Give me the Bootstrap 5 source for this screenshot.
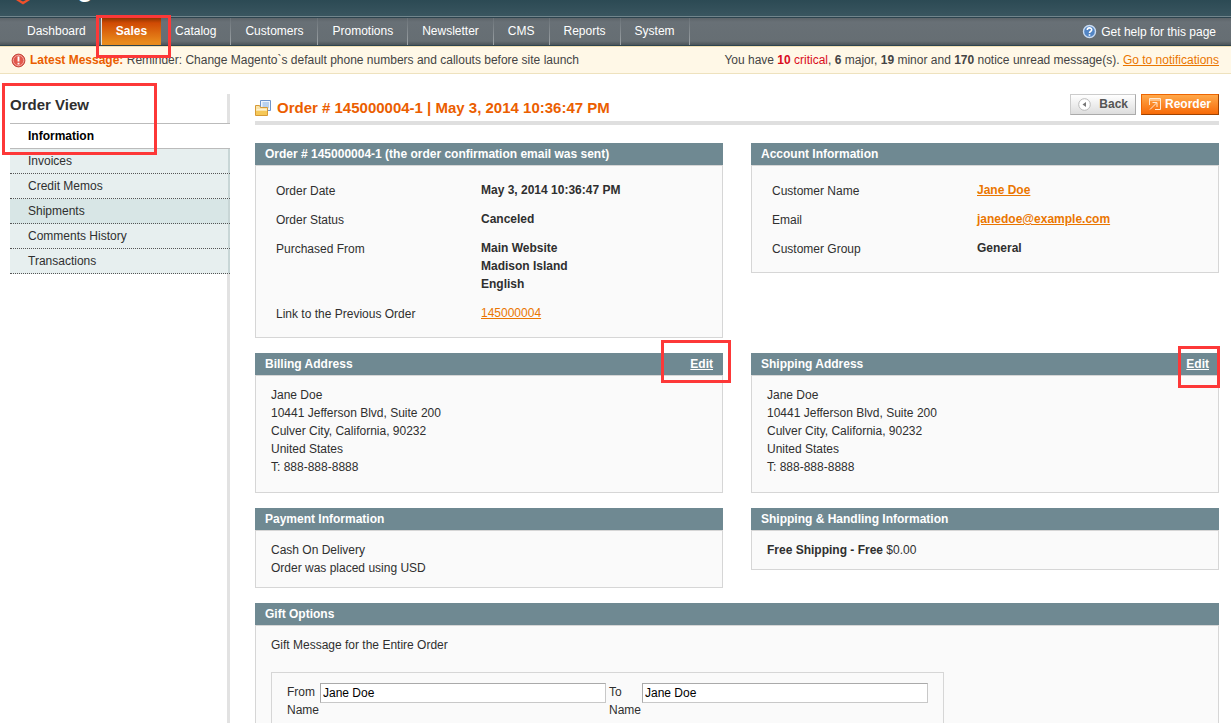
<!DOCTYPE html>
<html lang="en">
<head>
<meta charset="utf-8">
<meta name="viewport" content="width=device-width, initial-scale=1">
<title>Order # 145000004-1 / Orders / Sales</title>
<link href="https://cdn.jsdelivr.net/npm/bootstrap@5.3.0/dist/css/bootstrap.min.css" rel="stylesheet">
<script src="https://cdn.jsdelivr.net/npm/bootstrap@5.3.0/dist/js/bootstrap.bundle.min.js" defer></script>
<style>
body{font:12px/18px "Liberation Sans",Arial,sans-serif;color:#2f2f2f;background:#fff}
a{color:#ea7601}
a:hover{color:#c25f00}
.brand-bar{height:18px;background:linear-gradient(#2c4a54,#3a5660);border-bottom:1px solid #2d444f;box-shadow:inset 0 -1px #71858c;padding-left:16px}
.brand-name{font-size:30px;line-height:30px;margin:-29px 0 0 5px;color:#fff}
.main-nav{height:28px;background:linear-gradient(#5d6469,#687076 4px,#666e73 23px,#4d555a);border-bottom:1px solid #2d444f;padding:0 15px 0 13px}
.main-nav .nav-link{color:#fff;padding:4px 14px 5px;border-right:1px solid;border-image:linear-gradient(#687076,#a0a6a9) 1}
.main-nav .nav-link.dash{padding-right:15px;border-image:none;border-right-color:#e0e0e0}
.main-nav .nav-link.active{font-weight:700;border-right:0;background:linear-gradient(#8d3500,#d04a04 5px,#e98a1c 90%)}
.help-link{color:#fff}
.notice-bar{background:#fff8e7;border-bottom:1px solid #eee2be;border-top:1px solid #f1dfb4;color:#444;padding:4px 12px 4px 11px}
.notice-bar strong.latest{color:#ea5e00}
.critical{color:#d90c1c}
.side{width:230px;padding:20px 0 0 10px;background:linear-gradient(#e2e2e2,#e2e2e2) right 20px/3px no-repeat}
.side h3{font-size:15px;line-height:22px;padding-bottom:7px;border-bottom:1px solid #bbb}
.tabs a{color:#2f2f2f;padding:3px 18px;border-bottom:1px dotted #555;background:linear-gradient(#c8d6d6,#c8d6d6) right/2px no-repeat #e7efef}
.tabs a.active{color:#000;font-weight:700;background:#fff;border-bottom:1px solid #bbb}
.tabs a.changed{background-color:#d8e6e6}
.work{padding:20px 12px 0 25px}
.page-head{border-bottom:4px solid #dfdfdf;padding-bottom:3px;margin-bottom:18px}
.page-head h1{font-size:15px;line-height:21px;color:#eb5e00;padding-top:3px}
.acts{gap:5px}
.act{font:bold 12px/16px "Liberation Sans",Arial,sans-serif;border:1px solid;padding:1px 7px 2px;border-radius:0}
.act-back{color:#555;background:linear-gradient(#fff,#ddd);border-color:#ccc #aaa #aaa #ccc}
.act-go{color:#fff;background:linear-gradient(#ffa84a,#f76a07);border-color:#ed6502 #a04300 #a04300 #ed6502}
.cols{display:grid;grid-template-columns:1fr 1fr;column-gap:28px;align-items:start}
.box{margin-bottom:15px}
.box-head{background:#6f8992;color:#fff;padding:2px 10px}
.box-head h2{font-size:12px;line-height:18px}
.box-head a{color:#fff}
.box-body{background:#fafafa;border:1px solid #d6d6d6;padding:10px 15px}
.box-body.form{padding:15px 20px 4px}
.box-body.tall{padding-bottom:16px}
.form th{width:205px;font-weight:400;padding:1px 0 10px}
.form td{font-weight:700;padding:0 0 11px}
.form th,.form td{vertical-align:top}
.gift{border:1px solid #d6d6d6;max-width:673px;padding:10px 15px 60px;margin-top:18px;column-gap:3px}
.gift label{width:30px}
.gift input{border:1px solid;border-color:#aaa #c8c8c8 #c8c8c8 #aaa;background:#fff;padding:0 2px;height:20px;color:#000;width:286px}
/* Red frames that point out the parts of the screen to look at */
.frame{position:absolute;border:3px solid #fd3838;pointer-events:none;z-index:5}
.frame-sales{inset:-3px -10px -13px -6px}
.frame-side{inset:9px 73px auto 2px;height:72px}
.frame-bill{inset:-13px -8px -8px auto;width:70px}
.frame-ship{inset:-7px -1px -13px auto;width:42px}
</style>
</head>
<body class="vh-100 overflow-hidden d-flex flex-column">
<header>
  <div class="brand-bar d-flex align-items-start overflow-hidden">
    <svg width="14" height="5" viewBox="0 0 14 5" aria-hidden="true"><path d="M0 0H4L7 1.500 10 0H14L7 4.400z" fill="#f0502a"/></svg>
    <span class="brand-name">Magento</span>
  </div>
  <nav class="main-nav d-flex justify-content-between">
    <div class="nav flex-nowrap">
      <a class="nav-link dash" href="#">Dashboard</a>
      <a class="nav-link active position-relative" href="#">Sales<span class="frame frame-sales"></span></a>
      <a class="nav-link" href="#">Catalog</a>
      <a class="nav-link" href="#">Customers</a>
      <a class="nav-link" href="#">Promotions</a>
      <a class="nav-link" href="#">Newsletter</a>
      <a class="nav-link" href="#">CMS</a>
      <a class="nav-link" href="#">Reports</a>
      <a class="nav-link" href="#">System</a>
    </div>
    <a class="help-link text-decoration-none d-flex align-items-center gap-1" href="#">
      <svg width="15" height="15" viewBox="0 0 15 15" aria-hidden="true"><circle cx="7.5" cy="7.5" r="6" fill="#5285c4" stroke="#c9dcf3" stroke-width="1.4"/><path d="M5.3 6C5.3 3.2 9.7 3.3 9.7 5.8 9.7 7.4 7.5 7.2 7.5 9M7.5 10.2v1.5" fill="none" stroke="#fff" stroke-width="1.6"/></svg>
      Get help for this page</a>
  </nav>
  <div class="notice-bar d-flex justify-content-between">
    <div class="d-flex align-items-center gap-1">
      <svg width="15" height="15" viewBox="0 0 15 15" aria-hidden="true"><circle cx="7.5" cy="7.5" r="6.4" fill="#e2574c" stroke="#c5493f"/><circle cx="7.5" cy="7.5" r="5.2" fill="none" stroke="#f4b5ae" stroke-width=".8"/><path d="M7.5 3.4v5M7.5 9.8v1.8" stroke="#fff" stroke-width="1.9"/></svg>
      <span><strong class="latest">Latest Message:</strong> Reminder: Change Magento`s default phone numbers and callouts before site launch</span>
    </div>
    <div>You have <span class="critical"><strong>10</strong> critical</span>, <strong>6</strong> major, <strong>19</strong> minor and <strong>170</strong> notice unread message(s). <a href="#">Go to notifications</a></div>
  </div>
</header>
<div class="d-flex flex-grow-1">
  <aside class="side position-relative flex-shrink-0">
    <span class="frame frame-side"></span>
    <h3 class="fw-bold m-0">Order View</h3>
    <nav class="tabs d-flex flex-column">
      <a class="text-decoration-none active" href="#">Information</a>
      <a class="text-decoration-none" href="#">Invoices</a>
      <a class="text-decoration-none" href="#">Credit Memos</a>
      <a class="text-decoration-none changed" href="#">Shipments</a>
      <a class="text-decoration-none" href="#">Comments History</a>
      <a class="text-decoration-none" href="#">Transactions</a>
    </nav>
  </aside>
  <main class="work flex-grow-1">
    <div class="page-head d-flex justify-content-between align-items-start">
      <h1 class="fw-bold m-0 d-flex align-items-center">
        <svg class="me-1" width="18" height="16" viewBox="0 0 18 16" aria-hidden="true"><path d="M5.5.5h10v10h-10z" fill="#eef4fc" stroke="#6d94cb"/><path d="M7.500 3h6.500M7.500 5h6.500M7.500 7h6.500" stroke="#83aee0"/><path d="M.5 5.500h4l1 2h7v8H.5z" fill="#fbe3a8" stroke="#d69a35"/><path d="M1.500 9.500h10" stroke="#fff3cf"/><path d="M1 11h11v4H1z" fill="#f5c858"/></svg>
        Order # 145000004-1 | May 3, 2014 10:36:47 PM</h1>
      <div class="acts d-flex">
        <button type="button" class="act act-back d-flex align-items-center"><svg class="me-2" width="13" height="13" viewBox="0 0 13 13" aria-hidden="true"><circle cx="6.500" cy="6.500" r="5.800" fill="#fff" stroke="#bbb"/><path d="M8 4v5L4.500 6.500z" fill="#777"/></svg>Back</button>
        <button type="button" class="act act-go d-flex align-items-center"><svg class="me-1" width="12" height="12" viewBox="0 0 12 12" fill="none" stroke="#ffe9d2" aria-hidden="true"><path d="M.5 7V.5h11v11H6M.5 2h11M1 11.500 7.500 5M3.500 4.500H8v4.500"/></svg>Reorder</button>
      </div>
    </div>

    <div class="cols">
      <section class="box">
        <div class="box-head"><h2 class="fw-bold m-0">Order # 145000004-1 (the order confirmation email was sent)</h2></div>
        <div class="box-body form"><table class="w-100">
          <tr><th scope="row">Order Date</th><td>May 3, 2014 10:36:47 PM</td></tr>
          <tr><th scope="row">Order Status</th><td>Canceled</td></tr>
          <tr><th scope="row">Purchased From</th><td>Main Website<br>Madison Island<br>English</td></tr>
          <tr><th scope="row">Link to the Previous Order</th><td class="fw-normal"><a href="#">145000004</a></td></tr>
        </table></div>
      </section>
      <section class="box">
        <div class="box-head"><h2 class="fw-bold m-0">Account Information</h2></div>
        <div class="box-body form"><table class="w-100">
          <tr><th scope="row">Customer Name</th><td><a href="#">Jane Doe</a></td></tr>
          <tr><th scope="row">Email</th><td><a href="#">janedoe@example.com</a></td></tr>
          <tr><th scope="row">Customer Group</th><td>General</td></tr>
        </table></div>
      </section>
      <section class="box">
        <div class="box-head d-flex justify-content-between position-relative"><h2 class="fw-bold m-0">Billing Address</h2><a class="fw-bold" href="#">Edit</a><span class="frame frame-bill"></span></div>
        <div class="box-body tall"><address class="m-0">Jane Doe<br>10441 Jefferson Blvd, Suite 200<br>Culver City, California, 90232<br>United States<br>T: 888-888-8888</address></div>
      </section>
      <section class="box">
        <div class="box-head d-flex justify-content-between position-relative"><h2 class="fw-bold m-0">Shipping Address</h2><a class="fw-bold" href="#">Edit</a><span class="frame frame-ship"></span></div>
        <div class="box-body tall"><address class="m-0">Jane Doe<br>10441 Jefferson Blvd, Suite 200<br>Culver City, California, 90232<br>United States<br>T: 888-888-8888</address></div>
      </section>
      <section class="box">
        <div class="box-head"><h2 class="fw-bold m-0">Payment Information</h2></div>
        <div class="box-body">Cash On Delivery<br>Order was placed using USD</div>
      </section>
      <section class="box">
        <div class="box-head"><h2 class="fw-bold m-0">Shipping &amp; Handling Information</h2></div>
        <div class="box-body"><strong>Free Shipping - Free</strong> $0.00</div>
      </section>
    </div>
    <section class="box">
      <div class="box-head"><h2 class="fw-bold m-0">Gift Options</h2></div>
      <div class="box-body">
        Gift Message for the Entire Order
        <form class="gift d-flex align-items-start">
          <label for="from">From Name</label><input id="from" type="text" value="Jane Doe">
          <label for="to">To Name</label><input id="to" type="text" value="Jane Doe">
        </form>
      </div>
    </section>
  </main>
</div>
</body>
</html>
